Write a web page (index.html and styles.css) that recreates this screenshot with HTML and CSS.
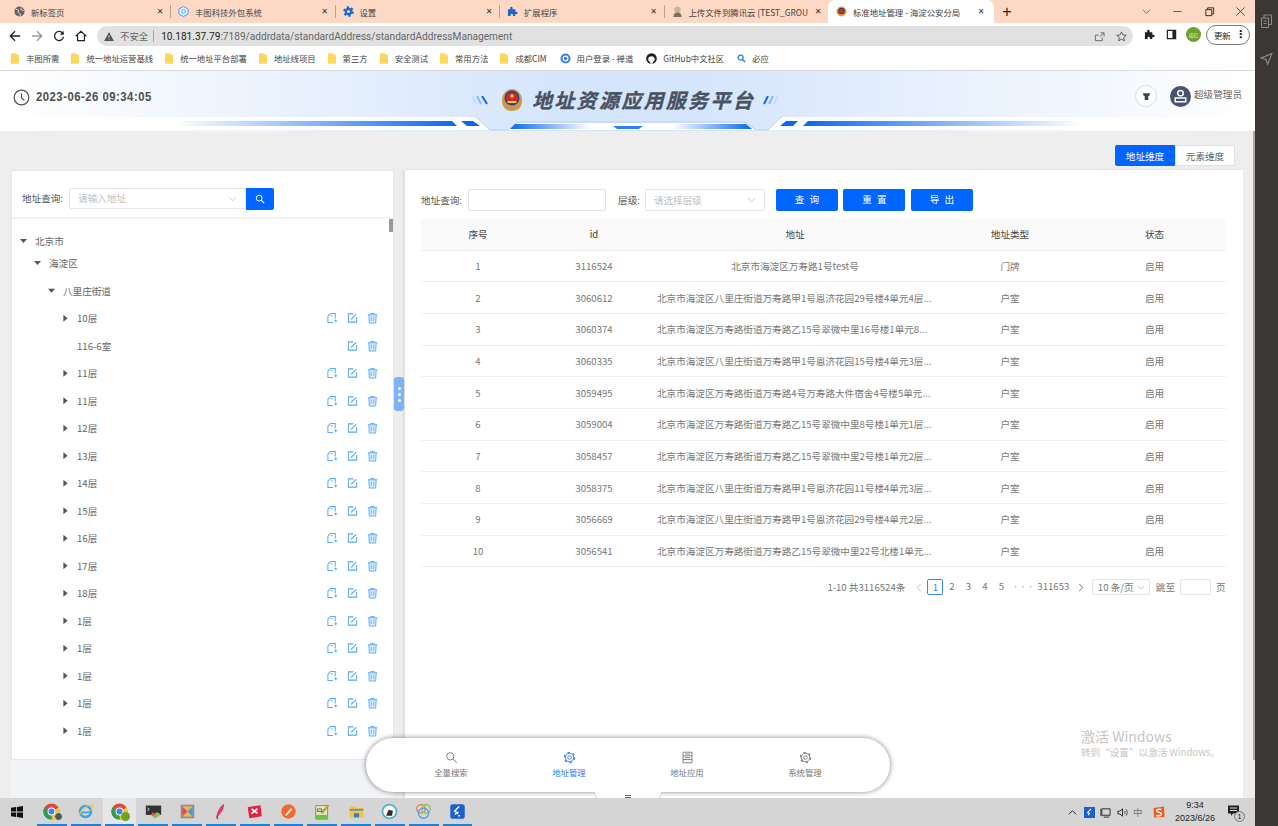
FILE: index.html
```html
<!DOCTYPE html>
<html lang="zh-CN">
<head>
<meta charset="utf-8">
<title>标准地址管理 - 海淀公安分局</title>
<link rel="stylesheet" href="styles.css">
</head>
<body>
<svg class="defs" width="0" height="0" aria-hidden="true">
  <defs>
    <symbol id="i-chrome" viewBox="0 0 20 20">
      <circle cx="10" cy="10" r="9.5" fill="#dd4b3e"/>
      <path d="M10 10 L18.2 5.2 A9.5 9.5 0 0 1 10 19.5Z" fill="#f5c518"/>
      <path d="M10 10 L10 19.5 A9.5 9.5 0 0 1 1.8 5.2Z" fill="#2e9e4f"/>
      <circle cx="10" cy="10" r="4.6" fill="#fff"/>
      <circle cx="10" cy="10" r="3.5" fill="#3f86ea"/>
    </symbol>
    <symbol id="i-folder" viewBox="0 0 9 12">
      <path d="M0 1.2C0 .5.5 0 1.2 0h3.3c.5 0 .8.2 1 .6L6 1.4h2c.6 0 1 .4 1 1v8.4c0 .7-.5 1.2-1.2 1.2H1.2C.5 12 0 11.5 0 10.8Z" fill="#fbd75b"/>
    </symbol>
    <symbol id="i-copy" viewBox="0 0 12 12">
      <path d="M4 1H9v5.500M4 1 1 4v7h5.500M8 9h3M9.500 7.500v3" fill="none" stroke="currentColor" stroke-width="1.100"/>
      <path d="M4 3.500h2.500" stroke="currentColor" stroke-width=".8"/>
    </symbol>
    <symbol id="i-edit" viewBox="0 0 12 12">
      <path d="M7 1.500H1.500v9h9V5" fill="none" stroke="currentColor" stroke-width="1.100"/>
      <path d="M4.500 7.500 10 2" fill="none" stroke="currentColor" stroke-width="1.300"/>
    </symbol>
    <symbol id="i-trash" viewBox="0 0 12 12">
      <path d="M.8 2.500h10.400M4 2.300V1h4v1.300M2 2.500l.5 9h7l.5-9" fill="rgba(88,168,250,.2)" stroke="currentColor" stroke-width="1"/>
      <path d="M4.600 4.500v5M7.400 4.500v5" stroke="currentColor" stroke-width=".9"/>
    </symbol>
    <symbol id="i-gear" viewBox="0 0 16 16">
      <circle cx="8" cy="8" r="5.200" fill="none" stroke="currentColor" stroke-width="1.100"/>
      <circle cx="8" cy="8" r="6.300" fill="none" stroke="currentColor" stroke-width="1.600" stroke-dasharray="2.800 3.800"/>
      <circle cx="8" cy="8" r="2.200" fill="none" stroke="currentColor" stroke-width="1.100"/>
    </symbol>
  </defs>
</svg>

<div class="screen">
  <div class="window">
    <div class="tabstrip">
      <div class="tab tab--first">
        <svg class="tab-icon" viewBox="0 0 12 12"><circle cx="6" cy="6" r="5.500" fill="#5f6368"/><path d="M2 3.500 5 4.500 4.500 7 7 8.500 6.500 11M8 1.500 7.500 4l3 1" fill="none" stroke="#fdd8c4" stroke-width="1"/></svg>
        <span class="tab-title">新标签页</span><span class="tab-x">✕</span>
      </div>
      <div class="tab">
        <svg class="tab-icon" viewBox="0 0 12 12"><path d="M6 .5 11 3.300v5.400L6 11.500 1 8.700V3.300Z" fill="#e6f0ff" stroke="#4d8ef0" stroke-width="1"/><circle cx="6" cy="6" r="2" fill="none" stroke="#38b6c9" stroke-width="1"/></svg>
        <span class="tab-title">丰图科技外包系统</span><span class="tab-x">✕</span>
      </div>
      <div class="tab">
        <svg class="tab-icon" viewBox="0 0 16 16"><circle cx="8" cy="8" r="5.500" fill="#1a66d2"/><circle cx="8" cy="8" r="6.500" fill="none" stroke="#1a66d2" stroke-width="2.500" stroke-dasharray="3.400 3.400"/><circle cx="8" cy="8" r="2.300" fill="#fdd8c4"/></svg>
        <span class="tab-title">设置</span><span class="tab-x">✕</span>
      </div>
      <div class="tab">
        <svg class="tab-icon" viewBox="0 0 12 12"><path d="M1 3.500h2.500V2.200a1.300 1.300 0 0 1 2.600 0v1.300h3v2.700h1.200a1.300 1.300 0 0 1 0 2.600H9.100v2.200H6.500V9.700a1.300 1.300 0 0 0-2.600 0v1.300H1Z" fill="#1a66d2"/></svg>
        <span class="tab-title">扩展程序</span><span class="tab-x">✕</span>
      </div>
      <div class="tab">
        <svg class="tab-icon" viewBox="0 0 12 12"><circle cx="6" cy="4" r="3.500" fill="#c9b39b"/><path d="M1.500 12c0-3.500 2-5 4.500-5s4.500 1.500 4.500 5Z" fill="#7b6f66"/></svg>
        <span class="tab-title tab-title--fade">上传文件到腾讯云 [TEST_GROU</span><span class="tab-x">✕</span>
      </div>
      <div class="tab tab--active">
        <svg class="tab-icon" viewBox="0 0 12 12"><circle cx="6" cy="6" r="5.500" fill="#d9a53a"/><circle cx="6" cy="5.500" r="3.600" fill="#23408f"/><circle cx="6" cy="5.500" r="2.600" fill="#d62b20"/></svg>
        <span class="tab-title">标准地址管理 - 海淀公安分局</span><span class="tab-x">✕</span>
      </div>
      <span class="tab-plus">+</span>
      <div class="win-controls">
        <svg class="win-ic" viewBox="0 0 12 12"><path d="M2 4l4 4 4-4" fill="none" stroke="#666" stroke-width="1"/></svg>
        <svg class="win-ic" viewBox="0 0 12 12"><path d="M1.500 6h9" stroke="#555" stroke-width="1"/></svg>
        <svg class="win-ic" viewBox="0 0 12 12"><path d="M2 4h6.500v6.500H2ZM4 4V2h6.500v6.500H8.500" fill="none" stroke="#222" stroke-width="1"/></svg>
        <svg class="win-ic" viewBox="0 0 12 12"><path d="M1.500 1.500l9 9M10.500 1.500l-9 9" stroke="#444" stroke-width="1"/></svg>
      </div>
    </div>

    <div class="toolbar">
      <svg class="nav-ic" viewBox="0 0 14 14"><path d="M13 7H2M7 1.500 1.500 7 7 12.500" fill="none" stroke="#222" stroke-width="1.500"/></svg>
      <svg class="nav-ic" viewBox="0 0 14 14"><path d="M1 7h11M7 1.500 12.500 7 7 12.500" fill="none" stroke="#999" stroke-width="1.500"/></svg>
      <svg class="nav-ic" viewBox="0 0 14 14"><path d="M11.800 4.500A5.300 5.300 0 1 0 12.300 8" fill="none" stroke="#222" stroke-width="1.500"/><path d="M12.500 1v4.500H8" fill="#222"/></svg>
      <svg class="nav-ic" viewBox="0 0 14 14"><path d="M7 1.500 1.500 6.500H3V12.500H11V6.500H12.500Z" fill="none" stroke="#222" stroke-width="1.400"/></svg>
      <div class="omnibox">
        <svg class="warn" viewBox="0 0 12 11"><path d="M6 0 12 11H0Z" fill="#555"/><path d="M6 4v3.500M6 8.500v1" stroke="#e0e0e0" stroke-width="1"/></svg>
        <span class="insecure">不安全</span>
        <span class="omni-sep"></span>
        <span class="url"><b>10.181.37.79</b>:7189/addrdata/standardAddress/standardAddressManagement</span>
        <svg class="omni-ic" viewBox="0 0 12 12"><path d="M7 2h4v4M11 2 6.500 6M9 7v3.500H1.500V4.500H5" fill="none" stroke="#666" stroke-width="1"/></svg>
        <svg class="omni-ic" viewBox="0 0 12 12"><path d="M6 1l1.500 3.300 3.700.4-2.800 2.400.8 3.600L6 8.900l-3.200 1.800.8-3.600L.8 4.700l3.700-.4Z" fill="none" stroke="#555" stroke-width="1"/></svg>
      </div>
      <div class="tool-right">
        <svg class="tool-ic" viewBox="0 0 12 12"><path d="M1 3.500h2.500V2.200a1.300 1.300 0 0 1 2.600 0v1.300h3v2.700h1.200a1.300 1.300 0 0 1 0 2.600H9.100v2.200H6.500V9.700a1.300 1.300 0 0 0-2.600 0v1.300H1Z" fill="#222"/></svg>
        <svg class="tool-ic" viewBox="0 0 12 12"><path d="M1.500 1.500h9v9h-9Z" fill="none" stroke="#222" stroke-width="1.300"/><path d="M7 1.500h3.500v9H7Z" fill="#222"/></svg>
        <span class="avatar">成亿</span>
        <span class="update"><span>更新</span><span class="update-dots">⋮</span></span>
      </div>
    </div>

    <div class="bookmarks">
      <span class="bm"><svg class="bm-folder"><use href="#i-folder"/></svg>丰图所需</span>
      <span class="bm"><svg class="bm-folder"><use href="#i-folder"/></svg>统一地址运营基线</span>
      <span class="bm"><svg class="bm-folder"><use href="#i-folder"/></svg>统一地址平台部署</span>
      <span class="bm"><svg class="bm-folder"><use href="#i-folder"/></svg>地址线项目</span>
      <span class="bm"><svg class="bm-folder"><use href="#i-folder"/></svg>第三方</span>
      <span class="bm"><svg class="bm-folder"><use href="#i-folder"/></svg>安全测试</span>
      <span class="bm"><svg class="bm-folder"><use href="#i-folder"/></svg>常用方法</span>
      <span class="bm"><svg class="bm-folder"><use href="#i-folder"/></svg>成都CIM</span>
      <span class="bm bm--site"><svg class="bm-ic" viewBox="0 0 12 12"><circle cx="6" cy="6" r="5.500" fill="#2f86e8"/><circle cx="6" cy="6" r="2.600" fill="none" stroke="#fff" stroke-width="1.300"/></svg>用户登录 - 禅道</span>
      <span class="bm bm--site"><svg class="bm-ic" viewBox="0 0 12 12"><circle cx="6" cy="6" r="5.800" fill="#1b1f23"/><path d="M4.500 11.500V9.500C3 9.500 2.500 8.500 2.500 6.500c0-2 1.500-3 3.500-3s3.500 1 3.500 3c0 2-.5 3-2 3v2Z" fill="#fff"/></svg>GitHub中文社区</span>
      <span class="bm bm--site"><svg class="bm-ic bm-ic--sm" viewBox="0 0 10 10"><circle cx="4" cy="4" r="2.800" fill="none" stroke="#2f7fd6" stroke-width="1.400"/><path d="M6 6l3 3" stroke="#2f7fd6" stroke-width="1.600"/></svg>必应</span>
    </div>

    <div class="page">
      <header class="app-header">
        <svg class="header-deco" viewBox="0 0 1255 15" preserveAspectRatio="none" aria-hidden="true">
          <defs>
            <linearGradient id="sl"><stop offset="0" stop-color="#fff"/><stop offset="1" stop-color="#0a68f0"/></linearGradient>
            <linearGradient id="sr"><stop offset="0" stop-color="#0a68f0"/><stop offset="1" stop-color="#fff"/></linearGradient>
            <linearGradient id="ll"><stop offset="0" stop-color="#fff"/><stop offset="1" stop-color="#a6c8f8"/></linearGradient>
            <linearGradient id="lr"><stop offset="0" stop-color="#a6c8f8"/><stop offset="1" stop-color="#fff"/></linearGradient>
            <linearGradient id="cl"><stop offset="0" stop-color="#0a68f0"/><stop offset=".75" stop-color="#fff"/></linearGradient>
            <linearGradient id="cr"><stop offset=".25" stop-color="#fff"/><stop offset="1" stop-color="#0a68f0"/></linearGradient>
          </defs>
          <path d="M0 1H475L490 14H0Z" fill="#fff"/>
          <path d="M782 1H1255V14H768Z" fill="#fff"/>
          <path d="M507 14 518 7H745L756 14Z" fill="#fff"/>
          <path d="M0 .5H475" stroke="url(#ll)" stroke-width="1.500"/>
          <path d="M782 .5H1255" stroke="url(#lr)" stroke-width="1.500"/>
          <path d="M475 0 490 14H507L518 6H745L756 14H768L782 0" fill="none" stroke="#b7d2f9" stroke-width="1"/>
          <path d="M175 5H452L457 10H175Z" fill="url(#sl)"/>
          <path d="M461 5H473L480 10H467Z" fill="#0a68f0"/>
          <path d="M803 10H1083V5H808Z" fill="url(#sr)"/>
          <path d="M780 10H793L798 5H786Z" fill="#0a68f0"/>
          <path d="M510 13 515 8H612L616 13Z" fill="url(#cl)"/>
          <path d="M752 13H646L650 8H746Z" fill="url(#cr)"/>
          <path d="M613 10H643L639 13H617Z" fill="#2f80f2"/>
        </svg>
        <div class="clock">
          <svg class="clock-ic" viewBox="0 0 18 18"><circle cx="9" cy="9" r="7.800" fill="none" stroke="#555" stroke-width="1.300"/><path d="M9 4.500V9.500L12 12" fill="none" stroke="#555" stroke-width="1.300"/></svg>
          <span class="clock-text">2023-06-26 09:34:05</span>
        </div>
        <div class="brand">
          <svg class="slashes" viewBox="0 0 18 9"><path d="M1 0 5 8" stroke="#c5dcfb" stroke-width="2"/><path d="M6 0 10 8" stroke="#8cb9fa" stroke-width="2"/><path d="M11 0 16 8" stroke="#0d68f0" stroke-width="2"/></svg>
          <svg class="emblem" viewBox="0 0 24 24">
            <path d="M12 1C6 1 2 6 2 13c0 6 4 10 10 10s10-4 10-10C22 6 18 1 12 1Z" fill="#c99a45"/>
            <circle cx="12" cy="10" r="7.500" fill="#24408e"/>
            <circle cx="12" cy="10" r="5.800" fill="#d8261c"/>
            <path d="M7.500 13h9v2h-9Z" fill="#f0c850"/>
            <circle cx="12" cy="8" r="1.800" fill="#f0c850"/>
          </svg>
          <h1 class="brand-title">地址资源应用服务平台</h1>
          <svg class="slashes" viewBox="0 0 18 9"><path d="M2 8 6 0" stroke="#0d68f0" stroke-width="2"/><path d="M7 8 11 0" stroke="#8cb9fa" stroke-width="2"/><path d="M12 8 16 0" stroke="#c5dcfb" stroke-width="2"/></svg>
        </div>
        <div class="user-area">
          <span class="cart"><svg viewBox="0 0 10 10"><path d="M1 1.500h8L8 4.500H7V9H3V4.500H2Z" fill="#444"/></svg></span>
          <span class="user-ic"><svg viewBox="0 0 20 20"><circle cx="10" cy="6.800" r="2.600" fill="none" stroke="#fff" stroke-width="1.400"/><path d="M5 11.500h10v3.500H5Z" fill="none" stroke="#fff" stroke-width="1.400"/></svg></span>
          <span class="user-name">超级管理员</span>
        </div>
      </header>

      <div class="content">
        <div class="dim-toggle">
          <span class="dim dim--on">地址维度</span><span class="dim">元素维度</span>
        </div>
        <div class="panels">
          <aside class="left-col">
            <div class="left-panel">
              <div class="left-search">
                <span class="field-label field-label--up">地址查询:</span>
                <div class="combo">
                  <span class="placeholder placeholder--up">请输入地址</span>
                  <svg class="chev" viewBox="0 0 10 6"><path d="M1 1l4 4 4-4" fill="none" stroke="#c4c4c4" stroke-width="1"/></svg>
                </div>
                <span class="combo-btn"><svg viewBox="0 0 12 12"><circle cx="5" cy="5" r="3.500" fill="none" stroke="#fff" stroke-width="1.200"/><path d="M7.500 7.500 11 11" stroke="#fff" stroke-width="1.400"/></svg></span>
              </div>
              <div class="tree">
                <div class="node node--short lvl0"><i class="caret caret--down"></i><span class="node-name">北京市</span></div>
                <div class="node node--short node--gap lvl1"><i class="caret caret--down"></i><span class="node-name">海淀区</span></div>
                <div class="node lvl2"><i class="caret caret--down"></i><span class="node-name">八里庄街道</span></div>
                <div class="node lvl3"><i class="caret caret--right"></i><span class="node-name">10层</span><span class="acts"><svg><use href="#i-copy"/></svg><svg><use href="#i-edit"/></svg><svg><use href="#i-trash"/></svg></span></div>
                <div class="node lvl3"><i class="caret"></i><span class="node-name">116-6室</span><span class="acts"><svg><use href="#i-edit"/></svg><svg><use href="#i-trash"/></svg></span></div>
                <div class="node lvl3"><i class="caret caret--right"></i><span class="node-name">11层</span><span class="acts"><svg><use href="#i-copy"/></svg><svg><use href="#i-edit"/></svg><svg><use href="#i-trash"/></svg></span></div>
                <div class="node lvl3"><i class="caret caret--right"></i><span class="node-name">11层</span><span class="acts"><svg><use href="#i-copy"/></svg><svg><use href="#i-edit"/></svg><svg><use href="#i-trash"/></svg></span></div>
                <div class="node lvl3"><i class="caret caret--right"></i><span class="node-name">12层</span><span class="acts"><svg><use href="#i-copy"/></svg><svg><use href="#i-edit"/></svg><svg><use href="#i-trash"/></svg></span></div>
                <div class="node lvl3"><i class="caret caret--right"></i><span class="node-name">13层</span><span class="acts"><svg><use href="#i-copy"/></svg><svg><use href="#i-edit"/></svg><svg><use href="#i-trash"/></svg></span></div>
                <div class="node lvl3"><i class="caret caret--right"></i><span class="node-name">14层</span><span class="acts"><svg><use href="#i-copy"/></svg><svg><use href="#i-edit"/></svg><svg><use href="#i-trash"/></svg></span></div>
                <div class="node lvl3"><i class="caret caret--right"></i><span class="node-name">15层</span><span class="acts"><svg><use href="#i-copy"/></svg><svg><use href="#i-edit"/></svg><svg><use href="#i-trash"/></svg></span></div>
                <div class="node lvl3"><i class="caret caret--right"></i><span class="node-name">16层</span><span class="acts"><svg><use href="#i-copy"/></svg><svg><use href="#i-edit"/></svg><svg><use href="#i-trash"/></svg></span></div>
                <div class="node lvl3"><i class="caret caret--right"></i><span class="node-name">17层</span><span class="acts"><svg><use href="#i-copy"/></svg><svg><use href="#i-edit"/></svg><svg><use href="#i-trash"/></svg></span></div>
                <div class="node lvl3"><i class="caret caret--right"></i><span class="node-name">18层</span><span class="acts"><svg><use href="#i-copy"/></svg><svg><use href="#i-edit"/></svg><svg><use href="#i-trash"/></svg></span></div>
                <div class="node lvl3"><i class="caret caret--right"></i><span class="node-name">1层</span><span class="acts"><svg><use href="#i-copy"/></svg><svg><use href="#i-edit"/></svg><svg><use href="#i-trash"/></svg></span></div>
                <div class="node lvl3"><i class="caret caret--right"></i><span class="node-name">1层</span><span class="acts"><svg><use href="#i-copy"/></svg><svg><use href="#i-edit"/></svg><svg><use href="#i-trash"/></svg></span></div>
                <div class="node lvl3"><i class="caret caret--right"></i><span class="node-name">1层</span><span class="acts"><svg><use href="#i-copy"/></svg><svg><use href="#i-edit"/></svg><svg><use href="#i-trash"/></svg></span></div>
                <div class="node lvl3"><i class="caret caret--right"></i><span class="node-name">1层</span><span class="acts"><svg><use href="#i-copy"/></svg><svg><use href="#i-edit"/></svg><svg><use href="#i-trash"/></svg></span></div>
                <div class="node lvl3"><i class="caret caret--right"></i><span class="node-name">1层</span><span class="acts"><svg><use href="#i-copy"/></svg><svg><use href="#i-edit"/></svg><svg><use href="#i-trash"/></svg></span></div>
                <span class="tree-thumb"></span>
              </div>
            </div>
            <span class="resizer"><i></i><i></i><i></i></span>
          </aside>

          <section class="right-panel">
            <div class="filters">
              <span class="field-label">地址查询:</span>
              <span class="input input--addr"></span>
              <span class="field-label field-label--level">层级:</span>
              <div class="combo combo--level">
                <span class="placeholder">请选择层级</span>
                <svg class="chev" viewBox="0 0 10 6"><path d="M1 1l4 4 4-4" fill="none" stroke="#c4c4c4" stroke-width="1"/></svg>
              </div>
              <span class="btn btn--first">查 询</span>
              <span class="btn">重 置</span>
              <span class="btn">导 出</span>
            </div>
            <table class="grid">
              <colgroup><col class="c1"><col class="c2"><col class="c3"><col class="c4"><col class="c5"></colgroup>
              <thead><tr><th>序号</th><th>id</th><th>地址</th><th>地址类型</th><th>状态</th></tr></thead>
              <tbody>
                <tr><td>1</td><td>3116524</td><td>北京市海淀区万寿路1号test号</td><td>门牌</td><td>启用</td></tr>
                <tr><td>2</td><td>3060612</td><td class="long">北京市海淀区八里庄街道万寿路甲1号恩济花园29号楼4单元4层...</td><td>户室</td><td>启用</td></tr>
                <tr><td>3</td><td>3060374</td><td class="long">北京市海淀区万寿路街道万寿路乙15号翠微中里16号楼1单元8...</td><td>户室</td><td>启用</td></tr>
                <tr><td>4</td><td>3060335</td><td class="long">北京市海淀区八里庄街道万寿路甲1号恩济花园15号楼4单元3层...</td><td>户室</td><td>启用</td></tr>
                <tr><td>5</td><td>3059495</td><td class="long">北京市海淀区万寿路街道万寿路4号万寿路大件宿舍4号楼5单元...</td><td>户室</td><td>启用</td></tr>
                <tr><td>6</td><td>3059004</td><td class="long">北京市海淀区万寿路街道万寿路乙15号翠微中里8号楼1单元1层...</td><td>户室</td><td>启用</td></tr>
                <tr><td>7</td><td>3058457</td><td class="long">北京市海淀区万寿路街道万寿路乙15号翠微中里2号楼1单元2层...</td><td>户室</td><td>启用</td></tr>
                <tr><td>8</td><td>3058375</td><td class="long">北京市海淀区八里庄街道万寿路甲1号恩济花园11号楼4单元3层...</td><td>户室</td><td>启用</td></tr>
                <tr><td>9</td><td>3056669</td><td class="long">北京市海淀区八里庄街道万寿路甲1号恩济花园29号楼4单元2层...</td><td>户室</td><td>启用</td></tr>
                <tr><td>10</td><td>3056541</td><td class="long">北京市海淀区万寿路街道万寿路乙15号翠微中里22号北楼1单元...</td><td>户室</td><td>启用</td></tr>
              </tbody>
            </table>
            <div class="pager">
              <span class="pg-total">1-10 共3116524条</span>
              <svg class="pg-arrow" viewBox="0 0 6 10"><path d="M5 1 1 5l4 4" fill="none" stroke="#bbb" stroke-width="1"/></svg>
              <span class="pg pg--on">1</span><span class="pg">2</span><span class="pg">3</span><span class="pg">4</span><span class="pg">5</span>
              <span class="pg pg--more">•••</span>
              <span class="pg pg--last">311653</span>
              <svg class="pg-arrow pg-arrow--next" viewBox="0 0 6 10"><path d="M1 1l4 4-4 4" fill="none" stroke="#666" stroke-width="1"/></svg>
              <span class="pg-size">10 条/页<svg viewBox="0 0 10 6"><path d="M1 1l4 4 4-4" fill="none" stroke="#bbb" stroke-width="1"/></svg></span>
              <span class="pg-jump">跳至</span>
              <span class="pg-input"></span>
              <span class="pg-unit">页</span>
            </div>
          </section>
        </div>
      </div>

      <span class="page-scroll"></span>

      <nav class="dock">
        <div class="dock-item">
          <svg viewBox="0 0 16 16"><circle cx="6.500" cy="6.500" r="4.500" fill="none" stroke="currentColor" stroke-width="1.100"/><path d="M10 10l4.500 4.500" stroke="currentColor" stroke-width="1.200"/></svg>
          <span>全量搜索</span>
        </div>
        <div class="dock-item dock-item--on">
          <svg viewBox="0 0 16 16"><use href="#i-gear"/></svg>
          <span>地址管理</span>
        </div>
        <div class="dock-item">
          <svg viewBox="0 0 16 16"><path d="M2.500 1.500h11v13h-11ZM2.500 6h11M2.500 10.500h11M5 3.800h6M5 8.200h6" fill="none" stroke="currentColor" stroke-width="1.100"/></svg>
          <span>地址应用</span>
        </div>
        <div class="dock-item">
          <svg viewBox="0 0 16 16"><use href="#i-gear"/></svg>
          <span>系统管理</span>
        </div>
        <span class="dock-tab"><i></i><i></i></span>
      </nav>

      <div class="watermark">
        <div class="wm-big">激活 Windows</div>
        <div class="wm-small">转到“设置”以激活 Windows。</div>
      </div>
    </div>

    <footer class="taskbar">
      <svg class="win-logo" viewBox="0 0 12 12"><path d="M0 1.700 5 1v4.600H0ZM5.800.9 12 0v5.600H5.800ZM0 6.400h5V11l-5-.7ZM5.800 6.400H12V12l-6.200-.9Z" fill="#111"/></svg>
      <div class="apps">
        <span class="app"><svg viewBox="0 0 20 20"><use href="#i-chrome"/></svg><i class="app-badge app-badge--gray"></i></span>
        <span class="app"><svg viewBox="0 0 20 20"><circle cx="10" cy="10" r="6.500" fill="none" stroke="#3ba4e6" stroke-width="3"/><path d="M4 11h12" stroke="#3ba4e6" stroke-width="2"/><path d="M2 16C4 8 12 2 18 2c2 1 0 5-2 7" fill="none" stroke="#efc743" stroke-width="1.300"/></svg></span>
        <span class="app app--active"><svg viewBox="0 0 20 20"><use href="#i-chrome"/></svg><i class="app-badge"></i></span>
        <span class="app"><svg viewBox="0 0 20 20"><path d="M1 3h18v11H1Z" fill="#333"/><path d="M3 6l2 1.500L3 9" stroke="#fff" fill="none"/><path d="M9 17l4-6 4 1 1 2-5 4Z" fill="#8bc34a"/><path d="M9 11l4 2-3 3-3-2Z" fill="#e05a4e"/></svg></span>
        <span class="app"><svg viewBox="0 0 20 20"><rect x="2" y="2" width="16" height="16" fill="#8a8f97"/><rect x="4" y="4" width="12" height="12" fill="#f4b63e"/><path d="M4 4l6 6-6 6Z" fill="#e0457b"/><path d="M16 4l-6 6 6 6Z" fill="#39a0e5"/></svg></span>
        <span class="app"><svg viewBox="0 0 20 20"><path d="M14 1c1 4-2 10-7 15l-2 3c0-6 3-14 9-18Z" fill="#e23d6a"/><path d="M6 15l1 4" stroke="#a05" stroke-width="1"/></svg></span>
        <span class="app"><svg viewBox="0 0 20 20"><path d="M2 5 17 2.500l1.500 13L4 18Z" fill="#e3213c"/><path d="M6.500 7l7 5M13.500 6.500l-7 6" stroke="#fff" stroke-width="2"/></svg></span>
        <span class="app"><svg viewBox="0 0 20 20"><circle cx="10" cy="10" r="8.500" fill="#f26a30"/><path d="M6 14 13 6l1.500 1.500L7.500 15Z" fill="#fff"/></svg></span>
        <span class="app"><svg viewBox="0 0 20 20"><path d="M2 3h14v16H2Z" fill="#dfe7c6" stroke="#7a8a5a"/><path d="M2 14h14v5H2Z" fill="#6fbf4a"/><path d="M8 11l8-9 2 1-8 10Z" fill="#c9962c"/><path d="M4 7h5v3H4Z" fill="none" stroke="#555"/></svg></span>
        <span class="app"><svg viewBox="0 0 20 20"><path d="M2 4h6l1.500 2H18v11H2Z" fill="#f5c242"/><path d="M2 7h16v2H2Z" fill="#3d9be0"/><path d="M7 12h6v5H7Z" fill="#2f7fc9"/></svg></span>
        <span class="app"><svg viewBox="0 0 20 20"><circle cx="10" cy="10" r="8.200" fill="#fff" stroke="#4fb6bb" stroke-width="2"/><path d="M6 15l3-7 5 1-1 6Z" fill="#332c2a"/></svg></span>
        <span class="app"><svg viewBox="0 0 20 20"><circle cx="7" cy="7" r="5" fill="none" stroke="#ef7b3a" stroke-width="1.500"/><circle cx="13" cy="7" r="5" fill="none" stroke="#8bbf4a" stroke-width="1.500"/><circle cx="10" cy="12" r="6" fill="none" stroke="#4aa0e0" stroke-width="1.500"/></svg></span>
        <span class="app"><svg viewBox="0 0 20 20"><rect x="1.500" y="1.500" width="17" height="17" rx="3" fill="#1e5fcf"/><path d="M12 4 6.500 9.500l3 1.500L7 13.500M11 10.500 9.500 13M11 15h2" fill="none" stroke="#fff" stroke-width="1.600"/></svg></span>
      </div>
      <div class="tray">
        <svg class="tray-ic" viewBox="0 0 12 12"><path d="M2 8l4-4 4 4" fill="none" stroke="#222" stroke-width="1"/></svg>
        <svg class="tray-ic" viewBox="0 0 12 12"><rect width="12" height="12" fill="#1e5fcf"/><path d="M7.500 2 4 6l2 1-1.500 2" fill="none" stroke="#fff" stroke-width="1.200"/></svg>
        <svg class="tray-ic" viewBox="0 0 12 12"><path d="M2 2h9v7H2ZM1 2v8M4 11h6" fill="none" stroke="#222" stroke-width="1"/></svg>
        <svg class="tray-ic" viewBox="0 0 12 12"><path d="M1 4.500h2L6 2v8L3 7.500H1Z" fill="none" stroke="#222"/><path d="M8 4c1 1 1 3 0 4M10 2.500c1.500 2 1.500 5 0 7" fill="none" stroke="#222" stroke-width=".8"/></svg>
        <span class="tray-ime">中</span>
        <svg class="tray-ic tray-ic--s" viewBox="0 0 12 12"><path d="M.5 2 11 .5 11.500 11 1 11.500Z" fill="#f25a1f"/><path d="M8.500 3.500C6 3 3.500 3.500 3.500 5s5 1 5 3-3 2-5.500 1.500" fill="none" stroke="#fff" stroke-width="1.400"/></svg>
        <div class="tray-clock"><span>9:34</span><span>2023/6/26</span></div>
        <span class="tray-note"><svg viewBox="0 0 12 12"><path d="M0 .5h11v8H5L3 11V8.500H0Z" fill="#222"/><path d="M2 3h7M2 5.500h7" stroke="#d4d4d4"/></svg><i>1</i></span>
      </div>
    </footer>
  </div>

  <aside class="sidebar">
    <svg viewBox="0 0 12 14"><path d="M1 4h7v9.500H1ZM3.500 4V1H11v9.500H8M3 7h3M3 9.500h3" fill="none" stroke="#8f8b89" stroke-width="1"/></svg>
    <svg viewBox="0 0 12 12"><path d="M11 1 1 5l4.500 1.500L7 11Z" fill="none" stroke="#8f8b89" stroke-width="1"/></svg>
  </aside>
</div>
</body>
</html>
```

FILE: styles.css
```css
* { box-sizing: border-box; }
html, body { margin: 0; padding: 0; width: 1278px; height: 826px; overflow: hidden; }
body { font-family: "Noto Sans CJK SC", "Noto Sans", "Liberation Sans", sans-serif; font-size: 9.6px; color: #666; background: #3b3735; }
.defs { position: absolute; }
.screen { display: flex; width: 1278px; height: 826px; }
.window { width: 1255px; display: flex; flex-direction: column; height: 826px; }
.sidebar { flex: 1; background: #3b3735; display: flex; flex-direction: column; align-items: center; padding-top: 14px; gap: 24px; }
.sidebar svg { width: 13px; height: 14px; }

/* tab strip */
.tabstrip { height: 23px; background: #fdd8c4; display: flex; align-items: stretch; flex: none; }
.tab { width: 164.500px; height: 23px; display: flex; align-items: center; padding: 0 5px 0 8px; font-size: 8.4px; color: #444; position: relative; }
.tab + .tab::before { content: ""; position: absolute; left: 0; top: 5px; height: 13px; width: 1px; background: #b8a294; }
.tab--first { width: 170px; padding-left: 14px; }
.tab--active { width: 166px; padding-right: 8px; background: #fff; border-radius: 7px 7px 0 0; color: #3c3c3c; }
.tab--active::before { display: none; }
.tab-icon { width: 11px; height: 11px; margin-right: 6px; flex: none; color: #1a66d2; }
.tab-title { white-space: nowrap; overflow: hidden; flex: 1; line-height: 12px; }
.tab-title--fade { flex: 1; }
.tab-x { font-size: 8px; color: #333; margin-left: 4px; width: 10px; text-align: center; flex: none; font-family: "DejaVu Sans", sans-serif; line-height: 12px; }
.tab-plus { width: 26px; text-align: center; font-size: 16px; line-height: 23px; color: #222; font-family: "Liberation Sans", sans-serif; }
.win-controls { margin-left: auto; display: flex; align-items: center; padding-right: 9px; gap: 20.500px; }
.win-ic { width: 11px; height: 11px; }

/* toolbar */
.toolbar { height: 23px; background: #fff; display: flex; align-items: flex-start; flex: none; padding-left: 9px; }
.nav-ic { width: 12px; height: 12px; margin: 7px 10px 0 0; flex: none; }
.omnibox { margin: 3px 0 0 0; height: 20px; width: 1036px; border-radius: 10px; background: #e1e1e1; display: flex; align-items: center; padding: 0 6px 0 7px; flex: none; }
.warn { width: 10px; height: 9px; flex: none; }
.insecure { font-size: 9.4px; color: #666; margin-left: 6px; line-height: 12px; }
.omni-sep { width: 1px; height: 12px; background: #aaa; margin: 0 7px 0 5px; }
.url { font-family: Roboto, "Liberation Sans", sans-serif; font-size: 10.150px; color: #666; flex: 1; white-space: nowrap; line-height: 13px; }
.url b { font-weight: 400; color: #222; }
.omni-ic { width: 11px; height: 11px; margin-left: 11px; flex: none; }
.tool-right { display: flex; align-items: center; margin-left: 11px; height: 23px; }
.tool-ic { width: 11px; height: 11px; margin-right: 11px; flex: none; }
.avatar { width: 15px; height: 15px; border-radius: 50%; background: #6ba328; color: #e8f2d8; font-size: 5px; line-height: 15px; text-align: center; margin: 0 5px 0 -2px; }
.update { width: 44px; height: 20px; border: 1px solid #777; border-radius: 10px; display: flex; align-items: center; justify-content: space-between; padding: 0 3px 0 7px; font-size: 8.4px; color: #222; line-height: 10px; }
.update-dots { font-weight: 700; font-size: 11px; font-family: "DejaVu Sans", sans-serif; }

/* bookmarks */
.bookmarks { height: 25px; background: #fff; border-bottom: 1px solid #d8d8d8; display: flex; align-items: center; padding-left: 11px; gap: 12px; flex: none; font-size: 8.350px; color: #444; }
.bm { display: inline-flex; align-items: center; line-height: 12px; white-space: nowrap; }
.bm--site { margin-left: 1px; }
.bm-folder { width: 8px; height: 11px; margin-right: 7px; flex: none; }
.bm-ic { width: 11px; height: 11px; margin-right: 6px; flex: none; }
.bm-ic--sm { width: 9px; height: 9px; }

/* page */
.page { flex: 1; min-height: 0; position: relative; background: #eee; display: flex; flex-direction: column; }
.app-header { height: 60px; flex: none; position: relative; display: grid; grid-template-columns: 1fr auto 1fr; background: linear-gradient(90deg, #fff 0, #d5e5fc 45%, #d5e5fc 55%, #fff 100%); }
.header-deco { position: absolute; left: 0; bottom: 0; width: 100%; height: 15px; }
.clock { display: flex; align-items: center; padding: 0 0 8px 13px; position: relative; gap: 6px; }
.clock-ic { width: 17px; height: 17px; flex: none; }
.clock-text { font-family: "Liberation Sans", sans-serif; font-weight: 700; font-size: 12.500px; letter-spacing: .55px; color: #4e4e4e; white-space: nowrap; transform: scaleX(.905); transform-origin: left center; }
.brand { display: flex; align-items: center; position: relative; padding-bottom: 2px; margin-left: -4px; }
.slashes { width: 18px; height: 9px; flex: none; }
.emblem { width: 24px; height: 24px; margin: 0 8px 0 11px; flex: none; }
.brand-title { margin: 0 7px 0 0; font-size: 20px; font-weight: 700; font-style: italic; letter-spacing: 2.300px; color: #4a5260; line-height: 24px; white-space: nowrap; -webkit-text-stroke: .35px #4a5260; }
.user-area { display: flex; align-items: flex-start; justify-content: flex-end; padding: 14px 13px 0 0; position: relative; }
.cart { width: 22px; height: 22px; border-radius: 50%; border: 1px solid #d6dde8; background: #fff; display: flex; align-items: center; justify-content: center; margin-right: 13px; }
.cart svg { width: 9px; height: 9px; }
.user-ic { width: 21px; height: 21px; border-radius: 50%; background: #4a5270; margin: 1px 3px 0 0; display: block; }
.user-ic svg { width: 21px; height: 21px; display: block; }
.user-name { font-size: 9.6px; color: #666; line-height: 18px; }

.content { flex: 1; min-height: 0; display: flex; flex-direction: column; padding: 14px 12px 0 11px; }
.dim-toggle { display: flex; justify-content: flex-end; margin: 0 8px 4px 0; height: 21px; flex: none; }
.dim { width: 60px; height: 21px; line-height: 20px; text-align: center; font-size: 9.6px; color: #666; background: #fff; border: 1px solid #e2e2e2; }
.dim--on { color: #fff; background: #0066ff; border-color: #0066ff; border-radius: 2px 0 0 2px; }
.panels { flex: 1; min-height: 0; display: flex; gap: 11px; }

/* left */
.left-col { width: 383px; flex: none; position: relative; background: #f1f3f7; }
.left-panel { height: 590px; background: #fff; border: 1px solid #e6e6e6; display: flex; flex-direction: column; }
.left-search { height: 48px; flex: none; display: flex; align-items: center; padding: 9px 0 0 10px; border-bottom: 2px solid #f4f4f4; }
.field-label { font-size: 9.6px; color: #555; line-height: 14px; white-space: nowrap; }
.field-label--up, .placeholder--up { margin-top: -1px; }
.combo { width: 177px; height: 21px; margin-left: 6px; border: 1px solid #e6e6e6; border-radius: 2px 0 0 2px; display: flex; align-items: center; justify-content: space-between; padding: 0 8px; background: #fff; }
.placeholder { color: #bfbfbf; font-size: 9.6px; line-height: 14px; }
.chev { width: 9px; height: 6px; flex: none; }
.combo-btn { width: 28px; height: 22px; background: #0066ff; border-radius: 0 2px 2px 0; display: flex; align-items: center; justify-content: center; }
.combo-btn svg { width: 10px; height: 10px; }
.tree { flex: 1; min-height: 0; position: relative; overflow: hidden; padding: 11px 0 0; }
.node { height: 27.500px; display: flex; align-items: center; color: #666; }
.node--short { height: 22px; }
.node--gap { margin-bottom: 3px; }
.lvl0 { padding-left: 8px; }
.lvl1 { padding-left: 22px; }
.lvl2 { padding-left: 36px; }
.lvl3 { padding-left: 50px; }
.caret { width: 7px; height: 7px; flex: none; margin-right: 8px; display: block; }
.caret--down { background: #555; clip-path: polygon(0 20%, 100% 20%, 50% 80%); }
.caret--right { background: #555; clip-path: polygon(20% 0, 80% 50%, 20% 100%); }
.node-name { line-height: 14px; }
.acts { margin-left: auto; display: flex; gap: 9px; padding-right: 15px; color: #58a8fa; }
.acts svg { width: 11px; height: 12px; }
.tree-thumb { position: absolute; right: 0; top: 0; width: 4px; height: 13px; background: #999; }
.resizer { position: absolute; right: -10px; top: 207px; width: 10px; height: 34px; background: #7fb2f6; border-radius: 3px; display: flex; flex-direction: column; align-items: center; justify-content: center; gap: 3px; }
.resizer i { width: 3px; height: 3px; border-radius: 50%; background: #fff; }

/* right */
.right-panel { flex: 1; min-width: 0; background: #fff; padding: 19px 17px 0 16px; box-shadow: -2px 0 3px rgba(0,0,0,.08); }
.filters { display: flex; align-items: center; height: 22px; margin-bottom: 8px; }
.input { display: block; height: 22px; border: 1px solid #e2e2e2; border-radius: 2px; background: #fff; }
.input--addr { width: 138px; margin-left: 6px; }
.field-label--level { margin-left: 12px; }
.combo--level { width: 120px; margin-left: 5px; height: 22px; border-radius: 2px; }
.btn { width: 62px; height: 22px; line-height: 21px; border-radius: 2px; background: #0066ff; color: #fff; text-align: center; font-size: 9.6px; word-spacing: 3px; margin-left: 5.500px; }
.btn--first { margin-left: 11px; }

.grid { width: 805px; border-collapse: collapse; table-layout: fixed; }
.c1 { width: 114px; } .c2 { width: 118px; } .c3 { width: 284px; } .c4 { width: 146px; } .c5 { width: 143px; }
.grid th { height: 31px; background: #fafafa; font-weight: 400; color: #444; font-size: 9.6px; border-bottom: 1px solid #eee; padding: 0; text-align: center; }
.grid td { height: 31.700px; font-size: 9.6px; color: #777; border-bottom: 1px solid #eee; padding: 0; text-align: center; white-space: nowrap; overflow: hidden; }
.grid td.long { text-align: left; padding-left: 4px; }

.pager { display: flex; align-items: center; justify-content: flex-end; height: 16px; margin-top: 12px; width: 805px; color: #777; font-size: 9.6px; }
.pg-total { margin-right: 11px; white-space: nowrap; }
.pg-arrow { width: 6px; height: 9px; margin-right: 5px; flex: none; }
.pg-arrow--next { margin: 0 0 0 8px; }
.pg { width: 16px; height: 16px; line-height: 15px; text-align: center; margin-right: .500px; flex: none; }
.pg--on { border: 1px solid #3b86f7; border-radius: 2px; color: #3b86f7; background: #fff; }
.pg--more { width: 27px; color: #aaa; font-size: 7px; margin-right: 0; white-space: nowrap; letter-spacing: .5px; }
.pg--last { width: 33px; margin-right: 0; }
.pg-size { width: 58px; height: 16px; border: 1px solid #e6e6e6; border-radius: 2px; margin-left: 8px; display: flex; align-items: center; justify-content: space-between; padding: 0 4px 0 5px; line-height: 14px; white-space: nowrap; }
.pg-size svg { width: 8px; height: 5px; flex: none; }
.pg-jump { margin-left: 6px; white-space: nowrap; }
.pg-input { width: 31px; height: 16px; border: 1px solid #e6e6e6; border-radius: 2px; margin: 0 5px; }
.pg-unit { width: 10px; }

.page-scroll { position: absolute; right: 0; top: 60px; width: 2px; height: 629px; background: #a9a9a9; }

/* dock */
.dock { position: absolute; left: 366px; top: 667px; width: 524px; height: 54px; border-radius: 27px; background: #fff; box-shadow: 0 0 4px 1px rgba(0,0,0,.35); display: grid; grid-template-columns: repeat(4, 118px); padding: 0 26px; }
.dock-item { display: flex; flex-direction: column; align-items: center; padding-top: 13px; color: #777; }
.dock-item svg { width: 13px; height: 13px; flex: none; }
.dock-item span { font-size: 8.400px; line-height: 12px; margin-top: 2px; }
.dock-item--on { color: #2f7bf5; }
.dock-tab { position: absolute; left: 229px; top: 54px; width: 66px; height: 7px; background: #fff; border-radius: 0 0 10px 10px; display: flex; flex-direction: column; align-items: center; justify-content: center; gap: 1px; padding-top: 1px; box-shadow: 0 1px 2px rgba(0,0,0,.2); }
.dock-tab i { width: 6px; height: 1px; background: #666; }

.watermark { position: absolute; left: 1081px; top: 656px; color: #c6c6c6; }
.wm-big { font-size: 14px; line-height: 18px; font-family: "Noto Sans CJK SC", "Noto Sans", sans-serif; }
.wm-small { font-size: 9.6px; line-height: 14px; }

/* taskbar */
.taskbar { height: 28px; flex: none; background: #d5d5d5; display: flex; align-items: center; position: relative; }
.win-logo { width: 12px; height: 12px; margin-left: 11px; flex: none; }
.apps { display: flex; margin-left: 12px; height: 28px; }
.app { width: 33.800px; height: 28px; position: relative; display: flex; align-items: center; justify-content: center; padding-bottom: 2px; }
.app::after { content: ""; position: absolute; left: 2px; right: 2px; bottom: 0; height: 2px; background: #1a80d8; }
.app svg { width: 17px; height: 17px; }
.app--active { background: #e6e6e6; }
.app-badge { position: absolute; right: 6px; bottom: 5px; width: 9px; height: 9px; border-radius: 50%; background: #6ba328; }
.app-badge--gray { background: #555; border: 1px solid #ddd; }
.tray { margin-left: auto; display: flex; align-items: center; height: 28px; padding-right: 13px; }
.tray-ic { width: 11px; height: 11px; margin-right: 5.500px; flex: none; }
.tray-ic--s { margin: 0 10px 0 4px; width: 12px; height: 12px; }
.tray-ime { width: 11px; font-size: 9.6px; color: #777; margin-right: 5px; line-height: 12px; }
.tray-clock { display: flex; flex-direction: column; align-items: center; width: 40px; font-family: "Liberation Sans", sans-serif; font-size: 9px; color: #222; line-height: 13px; }
.tray-note { position: relative; width: 14px; height: 14px; margin-left: 13px; display: block; }
.tray-note svg { width: 12px; height: 12px; display: block; }
.tray-note i { position: absolute; right: -3px; bottom: -3px; width: 11px; height: 11px; border-radius: 50%; background: #cfcfcf; border: 1px solid #777; font-style: normal; font-size: 7px; line-height: 9px; text-align: center; color: #222; font-family: "Liberation Sans", sans-serif; }
```
